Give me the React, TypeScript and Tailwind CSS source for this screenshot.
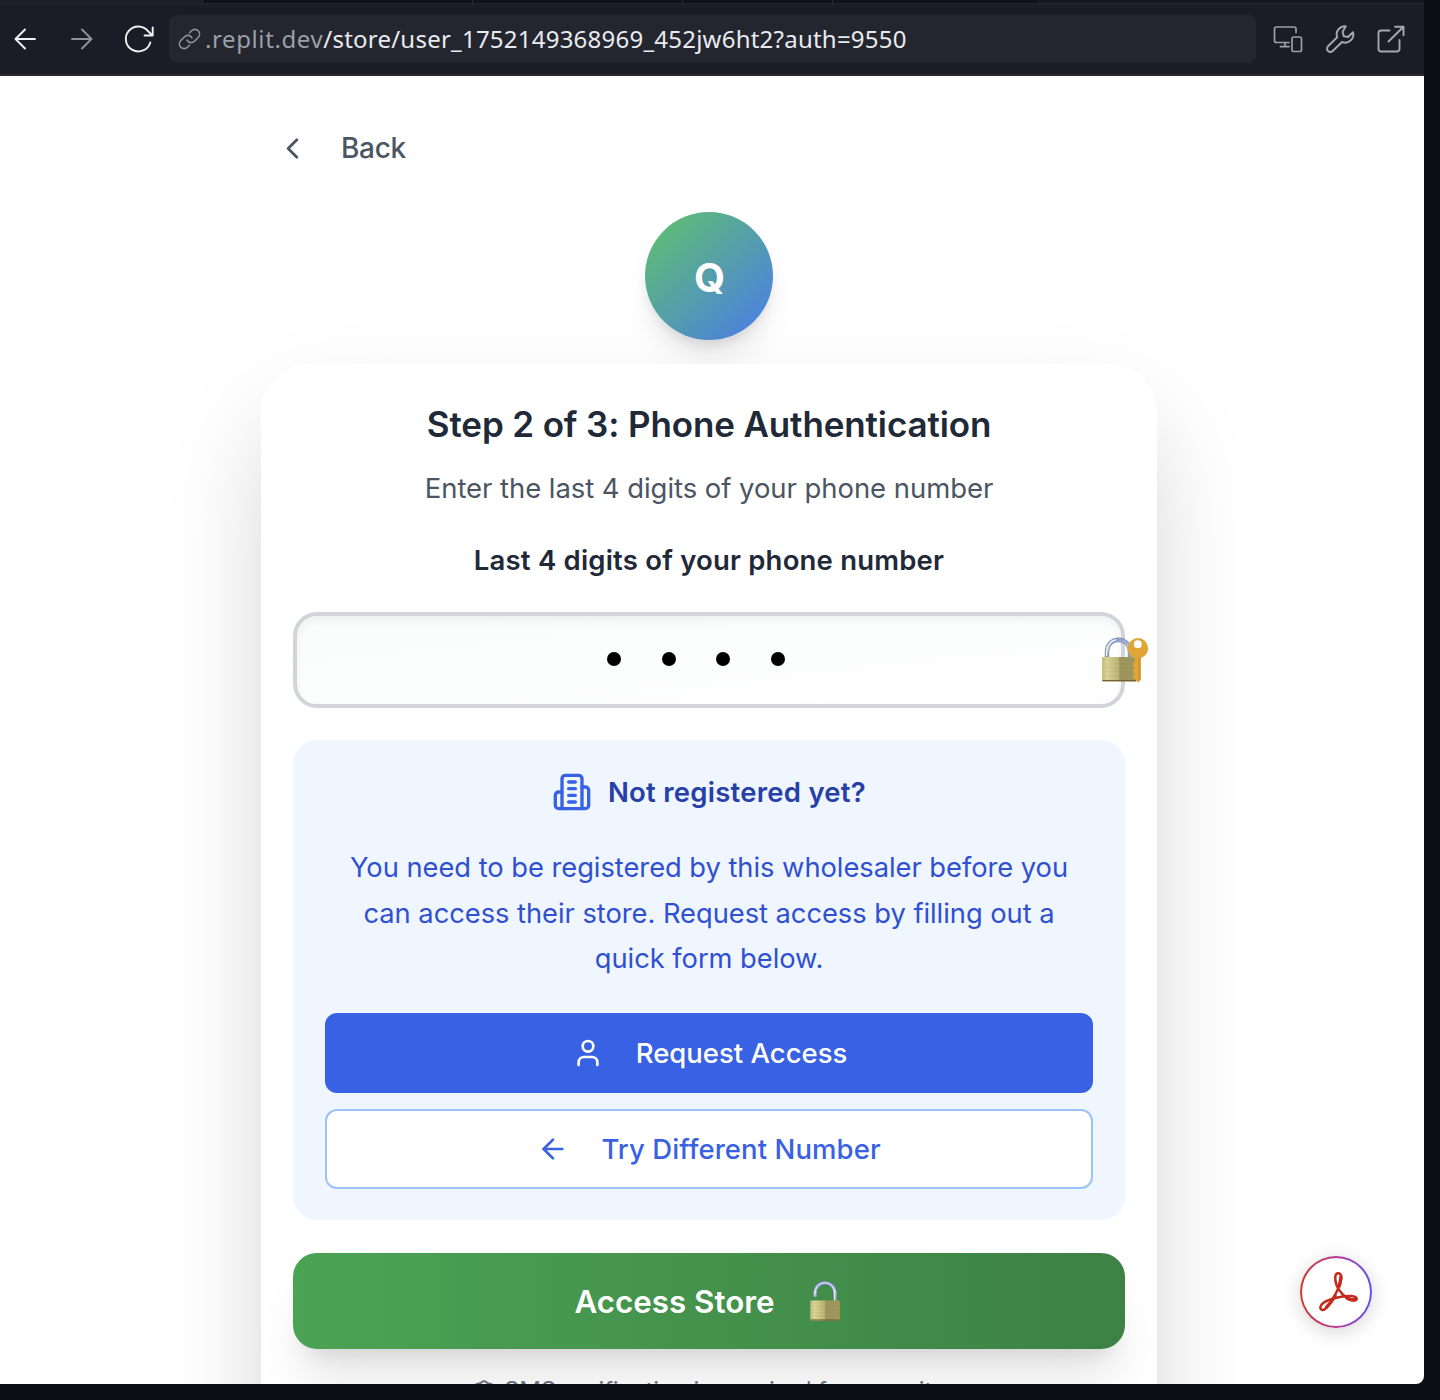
import React from "react";
import { ArrowLeft, ChevronLeft, User } from "lucide-react";

const stroke = {
  fill: "none",
  stroke: "currentColor",
  strokeLinecap: "round" as const,
  strokeLinejoin: "round" as const,
};

function BuildingIcon() {
  return (
    <svg className="size-10 text-[#3861e3]" viewBox="0 0 24 24" strokeWidth={2} {...stroke}>
      <path d="M6 22V4a2 2 0 0 1 2-2h8a2 2 0 0 1 2 2v18Z" />
      <path d="M6 12H4a2 2 0 0 0-2 2v6a2 2 0 0 0 2 2h2" />
      <path d="M18 9h2a2 2 0 0 1 2 2v9a2 2 0 0 1-2 2h-2" />
      <path d="M10 6h4M10 10h4M10 14h4M10 18h4" />
    </svg>
  );
}

function LockDefs({ id }: { id: string }) {
  return (
    <defs>
      <linearGradient id={id + "-body"} x1="0" x2="1" y1="0" y2="0">
        <stop offset="0" stopColor="#c5bd7c" />
        <stop offset="0.15" stopColor="#dad597" />
        <stop offset="0.48" stopColor="#bbb375" />
        <stop offset="0.52" stopColor="#9c955c" />
        <stop offset="0.94" stopColor="#a1985e" />
        <stop offset="1" stopColor="#b89a4c" />
      </linearGradient>
      <linearGradient id={id + "-metal"} x1="0" x2="0" y1="0" y2="1">
        <stop offset="0" stopColor="#8fa3d8" />
        <stop offset="0.5" stopColor="#c3cede" />
        <stop offset="1" stopColor="#8b98a0" />
      </linearGradient>
    </defs>
  );
}

function LockBody({ id, x, y, w, h }: { id: string; x: number; y: number; w: number; h: number }) {
  return (
    <g>
      <rect x={x} y={y} width={w} height={h} rx="1.2" fill={"url(#" + id + "-body)"} />
      {[0.12, 0.28, 0.44, 0.6, 0.76].map((f) => (
        <path key={f} d={`M${x + 1} ${y + h * f}h${w - 2}`} stroke="#746f35" strokeOpacity="0.16" strokeWidth="0.7" />
      ))}
      <path d={`M${x + 0.5} ${y + h - 0.8}h${w - 1}`} stroke="#736039" strokeWidth="1.2" />
    </g>
  );
}

function LockWithKey() {
  return (
    <svg className="h-12 w-12" viewBox="0 0 48 48">
      <LockDefs id="lk" />
      <path d="M6 21V15.500C6 -1.500 29 -1.500 29 15.500V21" fill="none" stroke="#7d8a98" strokeWidth="4.400" />
      <path d="M6 21V15.500C6 -1.500 29 -1.500 29 15.500V21" fill="none" stroke="url(#lk-metal)" strokeWidth="3" />
      <path d="M5.500 19V15.500C6 7 10 3.700 15 2.700" fill="none" stroke="#eef4fb" strokeWidth="1.200" />
      <LockBody id="lk" x={1} y={20} w={34.500} h={24.500} />
      <path
        fillRule="evenodd"
        fill="#e0a535"
        d="M36.800 1a10.300 10.300 0 0 1 3.200 20.100V42.500L37.300 45.500l-2.500-2v-1.500l-2.700-1.300v-2.600l2-1.300-2-1.600v-2.600l1.900-1.500-1.900-1.600v-2.800l1.900-1.600V21.100A10.300 10.300 0 0 1 36.800 1Zm0 2.200a4 4 0 1 0 0 8 4 4 0 0 0 0-8Z"
      />
      <path d="M38 21V43.500" stroke="#c3852a" strokeWidth="1" />
    </svg>
  );
}

function OpenLock() {
  return (
    <svg className="h-10 w-[30px]" viewBox="0 0 30 40">
      <LockDefs id="ol" />
      <path d="M5 16V12.500C5 -1.800 25 -1.800 25 12.500V21" fill="none" stroke="#667887" strokeWidth="4" />
      <path d="M5 15.700V12.500C5 -1.800 25 -1.800 25 12.500V21" fill="none" stroke="url(#ol-metal)" strokeWidth="2.800" />
      <path d="M4.600 13.500C5 6 9 2 14.500 1.700C20 1.800 23.600 5 24.600 11V20" fill="none" stroke="#e6eefb" strokeWidth="1" />
      <LockBody id="ol" x={0.300} y={19.500} w={29.400} h={20.300} />
    </svg>
  );
}

function AcrobatButton() {
  return (
    <div className="absolute top-[1256px] left-[1300px] size-[72px] rounded-full bg-linear-to-r/srgb from-[#cf3a2f] via-[#b73a92] to-[#6550f2] p-[2px] shadow-[0_4px_20px_rgba(0,0,0,0.16)]">
      <div className="grid size-full place-items-center rounded-full bg-white">
        <svg className="mr-px mb-px ml-1 h-[42px] w-[42px] text-[#c42b1d]" viewBox="-1 0 42 42" strokeWidth={2.500} {...stroke}>
          <path d="M20 2.200C16.700 2.200 16.500 8 18.500 14C20.600 20 27 27 34 29.200C40.500 31 40.300 25.500 33.500 25C25 24.400 8.500 28 3.800 33.400C0 38 4.500 41.200 8.600 36.600C14.500 30 23.300 13.500 23.300 6.500C23.300 3.600 22.300 2.200 20 2.200Z" />
          <path d="M21.200 15C22 12 23 9 22.900 6M8.500 36.200C12.500 32.500 15 28.500 17 25M28.500 26.500C31 28.300 34 29.300 37 28.200" strokeWidth="3.400" />
        </svg>
      </div>
    </div>
  );
}

function BrowserBar() {
  return (
    <header className="flex h-[76px] flex-col border-b-2 border-[#262932] bg-[#1a1d25]">
      <div className="flex h-1 shrink-0 border-b border-[#23262f]">
        <div className="w-[202px] bg-[#1a1d25]" />
        <div className="w-[270px] border-l border-[#2a2d36] bg-[#101119]" />
        <div className="w-[210px] border-l border-[#2a2d36] bg-[#101119]" />
        <div className="w-[150px] border-l border-[#2a2d36] bg-[#101119]" />
        <div className="w-[205px] border-l border-[#2a2d36] bg-[#101119]" />
        <div className="flex-1 bg-[#16181f]" />
      </div>
      <div className="flex h-[70px] items-center">
        <svg className="ml-[13px] size-6 text-[#f1f2f4]" viewBox="0 0 24 24" strokeWidth={1.900} {...stroke}>
          <path d="M22 12H3M12 2.500 2.500 12l9.500 9.500" />
        </svg>
        <svg className="ml-[33px] size-6 text-[#8f929c]" viewBox="0 0 24 24" strokeWidth={1.900} {...stroke}>
          <path d="M2 12h19M12 2.500 21.500 12 12 21.500" />
        </svg>
        <svg className="ml-[29px] size-8 text-[#f1f2f4]" viewBox="0 0 32 32" strokeWidth={1.900} {...stroke}>
          <path d="M27.300 19.500A12.500 12.500 0 1 1 25.200 8.300L29.500 12.500M29.700 4.500V12.500H21.500" />
        </svg>
        <div className="ml-[14px] flex h-12 w-[1087px] items-center rounded-lg bg-[#23262f]">
          <svg className="ml-[9px] size-6 text-[#8f929c]" viewBox="0 0 24 24" strokeWidth={1.600} {...stroke}>
            <path d="M9 13.200a4.700 4.700 0 0 0 7.400 1.100l3.800-3.800a4.700 4.700 0 0 0-6.700-6.700l-2 2" />
            <path d="M14 10.800a4.700 4.700 0 0 0-7.400-1.100l-3.800 3.800a4.700 4.700 0 0 0 6.700 6.700l2-2" />
          </svg>
          <p className="ml-[3px] flex font-['Noto_Sans',sans-serif] text-[24px] leading-8 whitespace-nowrap">
            <span className="tracking-[0.600px] text-[#9b9ea8]">.replit.dev</span>
            <span className="tracking-[0.230px] text-[#e9eaee]">/store/user_1752149368969_452jw6ht2?auth=9550</span>
          </p>
        </div>
        <svg className="ml-4 size-8 text-[#9b9ea8]" viewBox="0 0 32 32" strokeWidth={1.700} {...stroke}>
          <path d="M24 9.500V6a2 2 0 0 0-2-2H4.500a2 2 0 0 0-2 2v11.500a2 2 0 0 0 2 2H17M13 19.500v3.800M8.500 23.700H17" />
          <rect x="20" y="14" width="9.500" height="14.500" rx="1.800" />
        </svg>
        <svg className="ml-[20px] size-8 text-[#a5a8b1]" viewBox="0 0 32 32" strokeWidth={1.900} {...stroke}>
          <path d="M21.800 3.300A8.200 8.200 0 0 0 13.200 14.300L4 23.300A3.300 3.300 0 0 0 8.700 28L18 19A8.200 8.200 0 0 0 29 9.200L24 14L19.800 13.200L18.600 8.700Z" />
        </svg>
        <svg className="ml-[19px] size-8 text-[#a5a8b1]" viewBox="0 0 32 32" strokeWidth={1.900} {...stroke}>
          <path d="M14.500 7.500H6a2.500 2.500 0 0 0-2.500 2.500v16A2.500 2.500 0 0 0 6 28.500h16a2.500 2.500 0 0 0 2.500-2.500v-9M13.500 18.500 28.500 3.700M20 3.700h8.500v8.500" />
        </svg>
      </div>
    </header>
  );
}

export default function App() {
  return (
    <div className="h-[1400px] w-[1440px] overflow-hidden bg-[#0e0f14] font-[Inter,sans-serif]">
      <div className="relative h-[1384px] w-[1424px] overflow-hidden rounded-br-lg bg-white">
        <BrowserBar />
        <main className="flex w-[1418px] flex-col items-center">
          <div className="mt-12 flex h-12 w-[896px] items-center text-[#4b5563]">
            <ChevronLeft className="ml-[14px] size-[35px]" strokeWidth={1.900} />
            <span className="ml-[31px] text-[28px] leading-10 font-medium tracking-[-0.300px]">Back</span>
          </div>
          <div className="mt-10 grid size-32 shrink-0 place-items-center rounded-full bg-linear-to-br/srgb from-[#5fc368] to-[#4b7bec] shadow-[0_20px_30px_-6px_rgba(0,0,0,0.1),0_8px_12px_-4px_rgba(0,0,0,0.1)]">
            <span className="mt-[3px] ml-px text-[40px] leading-none font-bold text-white">Q</span>
          </div>

          <section className="mt-6 flex h-[1180px] w-[896px] shrink-0 flex-col items-center rounded-[48px] bg-white px-8 pt-8 shadow-[0_50px_110px_-16px_rgba(0,0,0,0.21)]">
            <h1 className="text-[35px] leading-[56px] font-semibold tracking-[-0.120px] whitespace-nowrap text-[#1f2937]">
              Step 2 of 3: Phone Authentication
            </h1>
            <p className="mt-4 text-[27.500px] leading-10 tracking-[-0.060px] text-[#4b5563]">
              Enter the last 4 digits of your phone number
            </p>
            <label className="mt-8 text-[27.500px] leading-10 font-semibold tracking-[0.200px] text-[#1f2937]">
              Last 4 digits of your phone number
            </label>
            <div className="relative mt-8 flex h-24 w-full shrink-0 items-center justify-center gap-[40.500px] rounded-3xl border-4 border-[#d1d5db] bg-linear-to-br/srgb from-[#fafbfb] to-white pr-[26px] pb-[2px] shadow-[inset_0_4px_8px_rgba(0,0,0,0.05)]">
              <i className="size-[14px] rounded-full bg-black" />
              <i className="size-[14px] rounded-full bg-black" />
              <i className="size-[14px] rounded-full bg-black" />
              <i className="size-[14px] rounded-full bg-black" />
              <span className="absolute top-[21px] -right-[28px]">
                <LockWithKey />
              </span>
            </div>

            <div className="mt-8 flex h-[480px] w-full shrink-0 flex-col items-center rounded-3xl bg-[#eff6ff] p-8">
              <div className="flex h-10 items-center gap-4">
                <BuildingIcon />
                <h2 className="text-[27.500px] leading-10 font-semibold tracking-[0.250px] text-[#2740a8]">
                  Not registered yet?
                </h2>
              </div>
              <p className="mt-[33px] text-center text-[27.300px] leading-[45.500px] tracking-[-0.030px] whitespace-nowrap text-[#2f50d0]">
                You need to be registered by this wholesaler before you
                <br />
                can access their store. Request access by filling out a
                <br />
                quick form below.
              </p>
              <button className="mt-[31px] flex h-20 w-full shrink-0 items-center justify-center gap-8 rounded-xl bg-[#3861e3] text-[27.500px] font-medium text-white">
                <User className="ml-px size-8" strokeWidth={2} />
                <span className="pt-0.5">Request Access</span>
              </button>
              <button className="mt-4 flex h-20 w-full shrink-0 items-center justify-center gap-8 rounded-xl border-2 border-[#9bc3fa] bg-white text-[27.500px] font-medium tracking-[0.080px] text-[#3861e3]">
                <ArrowLeft className="size-8" strokeWidth={2} />
                <span className="pt-0.5">Try Different Number</span>
              </button>
            </div>

            <button className="mt-[33px] flex h-24 w-full shrink-0 items-center justify-center gap-9 rounded-3xl bg-linear-to-r/srgb from-[#4ba354] to-[#3d8145] pr-[3px] text-[31.300px] font-semibold text-white shadow-[0_40px_50px_-10px_rgba(0,0,0,0.1),0_16px_20px_-12px_rgba(0,0,0,0.1)]">
              <span className="pt-[3px]">Access Store</span>
              <OpenLock />
            </button>
            <p className="mt-[22px] flex h-10 items-center gap-2 text-[24px] leading-8 tracking-[-0.180px] whitespace-nowrap text-[#6b7280]">
              <svg className="size-6" viewBox="0 0 24 24" strokeWidth={2} {...stroke}>
                <path d="M20 13c0 5-3.500 7.500-7.660 8.950a1 1 0 0 1-.670-.010C7.500 20.500 4 18 4 13V6a1 1 0 0 1 1-1c2 0 4.500-1.200 6.240-2.720a1.170 1.170 0 0 1 1.520 0C14.510 3.810 17 5 19 5a1 1 0 0 1 1 1z" />
              </svg>
              SMS verification is required for security
            </p>
          </section>
        </main>
        <AcrobatButton />
      </div>
    </div>
  );
}
